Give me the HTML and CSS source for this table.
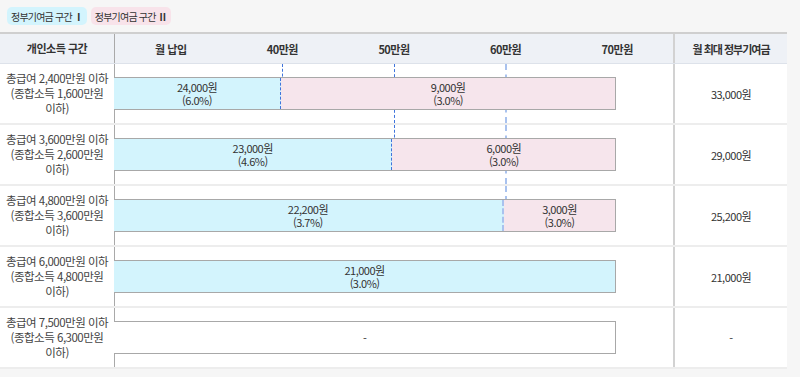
FILE: index.html
```html
<!DOCTYPE html>
<html lang="ko">
<head>
<meta charset="utf-8">
<link rel="stylesheet" href="styles.css">
</head>
<body>
<div class="legend">
  <span class="badge badge-one">정부기여금 구간 <b>Ⅰ</b></span>
  <span class="badge badge-two">정부기여금 구간 <b>Ⅱ</b></span>
</div>
<div class="table">
  <div class="row head">
    <div class="c1">개인소득 구간</div>
    <div class="c2 scale">
      <span>월 납입</span><span>40만원</span><span>50만원</span><span>60만원</span><span>70만원</span>
    </div>
    <div class="c3">월 최대 정부기여금</div>
  </div>

  <div class="row">
    <div class="c1">총급여 2,400만원 이하 (종합소득 1,600만원 이하)</div>
    <div class="c2 chart">
      <i class="guide g30 to-bar"></i><i class="guide g50"></i><i class="guide g70 soft"></i>
      <div class="bar">
        <div class="seg s1" style="width:33.33%"><span class="ln">24,000원</span><span class="ln">(6.0%)</span></div>
        <div class="seg s2"><span class="ln">9,000원</span><span class="ln">(3.0%)</span></div>
      </div>
    </div>
    <div class="c3">33,000원</div>
  </div>

  <div class="row">
    <div class="c1">총급여 3,600만원 이하 (종합소득 2,600만원 이하)</div>
    <div class="c2 chart">
      <i class="guide g50 to-bar"></i><i class="guide g70 soft"></i>
      <div class="bar">
        <div class="seg s1" style="width:55.56%"><span class="ln">23,000원</span><span class="ln">(4.6%)</span></div>
        <div class="seg s2"><span class="ln">6,000원</span><span class="ln">(3.0%)</span></div>
      </div>
    </div>
    <div class="c3">29,000원</div>
  </div>

  <div class="row">
    <div class="c1">총급여 4,800만원 이하 (종합소득 3,600만원 이하)</div>
    <div class="c2 chart">
      <i class="guide g70 soft to-bar"></i>
      <div class="bar">
        <div class="seg s1 soft-edge" style="width:77.78%"><span class="ln">22,200원</span><span class="ln">(3.7%)</span></div>
        <div class="seg s2"><span class="ln">3,000원</span><span class="ln">(3.0%)</span></div>
      </div>
    </div>
    <div class="c3">25,200원</div>
  </div>

  <div class="row">
    <div class="c1">총급여 6,000만원 이하 (종합소득 4,800만원 이하)</div>
    <div class="c2 chart">
      <div class="bar">
        <div class="seg s1 full"><span class="ln">21,000원</span><span class="ln">(3.0%)</span></div>
      </div>
    </div>
    <div class="c3">21,000원</div>
  </div>

  <div class="row">
    <div class="c1">총급여 7,500만원 이하 (종합소득 6,300만원 이하)</div>
    <div class="c2 chart">
      <div class="bar">
        <div class="seg empty">-</div>
      </div>
    </div>
    <div class="c3">-</div>
  </div>
</div>
</body>
</html>
```

FILE: styles.css
```css
* { box-sizing: border-box; }
html, body { margin: 0; padding: 0; }
body {
  background: #f6f6f6;
  font-family: "Noto Sans CJK KR", "Noto Sans", sans-serif;
  color: #333;
  letter-spacing: -0.5px;
}
.legend {
  display: flex;
  gap: 4px;
  padding: 7px 7px;
  height: 32px;
}
.badge {
  display: inline-flex;
  align-items: center;
  height: 18px;
  padding: 0 4px;
  border-radius: 5px;
  font-size: 10px;
  letter-spacing: -0.8px;
  color: #333;
}
.badge b { font-weight: 700; margin-left: 2px; letter-spacing: -1px; }
.badge-one { background: #d3f4fd; }
.badge-two { background: #f8e3ea; }

.table {
  width: 787px;
  background: #fff;
  border-top: 2px solid #cfcfcf;
}
.row {
  display: grid;
  grid-template-columns: 115px 1fr 114px;
  height: 61px;
  border-bottom: 2px solid #ededed;
}
.row.head {
  height: 30px;
  background: #eef1f6;
  border-bottom: 1px solid #dde2ea;
  font-weight: 700;
  font-size: 11px;
}
.c1 {
  border-right: 1px solid #a9a9a9;
  display: flex;
  align-items: center;
  justify-content: center;
  text-align: center;
  font-size: 11.5px;
  line-height: 15px;
  color: #444;
  padding: 0 3px;
  word-break: keep-all;
}
.c3 {
  border-left: 2px solid #d2d2d2;
  display: flex;
  align-items: center;
  justify-content: center;
  font-size: 11px;
}
.head .c1, .head .c3 { font-size: 11px; color: #333; }
.head .c3 { letter-spacing: -1px; }
.scale {
  display: grid;
  grid-template-columns: repeat(5, 1fr);
  align-items: center;
  text-align: center;
}
.chart {
  position: relative;
  display: flex;
  align-items: center;
}
.guide {
  position: absolute;
  top: 0;
  bottom: 0;
  border-left: 1px dashed #3f74dc;
}
.guide.soft { border-left: 2px dashed #a9c2ee; margin-left: -1px; }
.guide.to-bar { bottom: 13px; }
.g30 { left: 30%; }
.g50 { left: 50%; }
.g70 { left: 70%; }
.bar {
  position: relative;
  z-index: 1;
  display: flex;
  width: 90%;
  height: 33px;
  border: 1px solid #a8a8a8;
  border-left: none;
  background: #fff;
  margin-left: -1px;
}
.seg {
  display: flex;
  flex-direction: column;
  align-items: center;
  justify-content: center;
  text-align: center;
  font-size: 11px;
  color: #333;
}
.ln { display: block; height: 13px; line-height: 13px; }
.s1 { background: #d3f4fd; border-right: 1px dashed #3f74dc; }
.s1.soft-edge { border-right: 2px dashed #a9c2ee; }
.s1.full { border-right: none; flex: 1; }
.s2 { background: #f6e5ec; flex: 1; }
.empty { flex: 1; background: #fff; }
```
